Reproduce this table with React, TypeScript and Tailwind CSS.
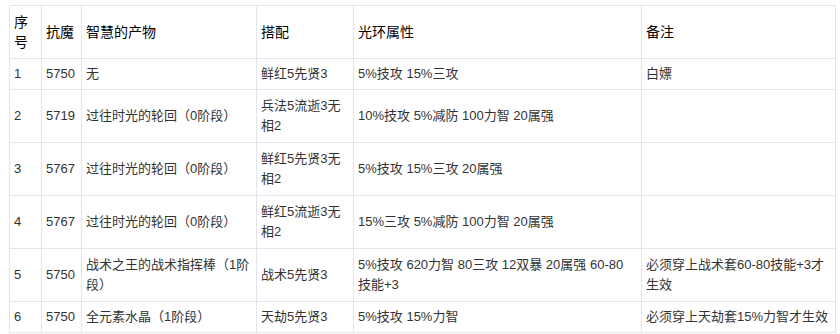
const rows = [
  { no: '1', mk: '5750', item: ['无'], set: ['鲜红5先贤3'], aura: ['5%技攻 15%三攻'], note: ['白嫖'] },
  { no: '2', mk: '5719', item: ['过往时光的轮回（0阶段）'], set: ['兵法5流逝3无', '相2'], aura: ['10%技攻 5%减防 100力智 20属强'], note: [] },
  { no: '3', mk: '5767', item: ['过往时光的轮回（0阶段）'], set: ['鲜红5先贤3无', '相2'], aura: ['5%技攻 15%三攻 20属强'], note: [] },
  { no: '4', mk: '5767', item: ['过往时光的轮回（0阶段）'], set: ['鲜红5流逝3无', '相2'], aura: ['15%三攻 5%减防 100力智 20属强'], note: [] },
  {
    no: '5',
    mk: '5750',
    item: ['战术之王的战术指挥棒（1阶', '段）'],
    set: ['战术5先贤3'],
    aura: ['5%技攻 620力智 80三攻 12双暴 20属强 60-80', '技能+3'],
    note: ['必须穿上战术套60-80技能+3才', '生效'],
  },
  { no: '6', mk: '5750', item: ['全元素水晶（1阶段）'], set: ['天劫5先贤3'], aura: ['5%技攻 15%力智'], note: ['必须穿上天劫套15%力智才生效'] },
]

function Lines({ lines }: { lines: string[] }) {
  return (
    <>
      {lines.map((l, i) => (
        <div key={i} className="whitespace-nowrap">
          {l}
        </div>
      ))}
    </>
  )
}

const td = 'border-r border-b border-[#dfe6ee] px-[4px] py-0 text-left align-middle'

export default function App() {
  return (
    <div
      className="h-[334px] w-[840px] overflow-hidden bg-white text-[13px] leading-[20px] text-[#333]"
      style={{ fontFamily: '"Liberation Sans", "Noto Sans CJK SC", sans-serif' }}
    >
      <div className="h-[5px] overflow-hidden pl-[16px]">
        <div className="-mt-[20px] text-[16px] font-bold leading-[20px] text-[#ff0000]">
          六、智慧产物推荐搭配
        </div>
      </div>
      <table className="ml-[9px] w-[827px] table-fixed border-separate border-spacing-0 border-l border-t border-[#dfe6ee]">
        <colgroup>
          <col className="w-[32px]" />
          <col className="w-[40px]" />
          <col className="w-[175px]" />
          <col className="w-[97px]" />
          <col className="w-[288px]" />
          <col className="w-[194px]" />
        </colgroup>
        <thead>
          <tr className="h-[53px] text-[14px] text-black">
            <th className={`${td} font-normal`}>
              <div>序</div>
              <div>号</div>
            </th>
            <th className={`${td} font-normal`}>抗魔</th>
            <th className={`${td} font-normal`}>智慧的产物</th>
            <th className={`${td} font-normal`}>搭配</th>
            <th className={`${td} font-normal`}>光环属性</th>
            <th className={`${td} font-normal`}>备注</th>
          </tr>
        </thead>
        <tbody>
          {rows.map((r) => {
            const tall = [r.item, r.set, r.aura, r.note].some((c) => c.length > 1)
            return (
              <tr key={r.no} className={tall ? 'h-[53px]' : 'h-[31px]'}>
                <td className={td}>{r.no}</td>
                <td className={td}>{r.mk}</td>
                <td className={td}>
                  <Lines lines={r.item} />
                </td>
                <td className={td}>
                  <Lines lines={r.set} />
                </td>
                <td className={td}>
                  <Lines lines={r.aura} />
                </td>
                <td className={td}>
                  <Lines lines={r.note} />
                </td>
              </tr>
            )
          })}
        </tbody>
      </table>
    </div>
  )
}
